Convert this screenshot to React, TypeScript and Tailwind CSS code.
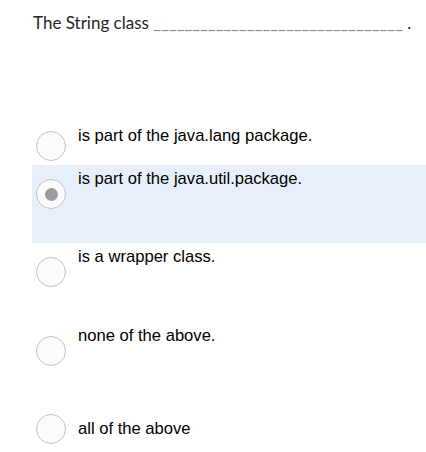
import React from 'react';

interface Choice {
  label: string;
  checked?: boolean;
  row: string;
  radio: string;
  text: string;
}

const choices: Choice[] = [
  { label: 'is part of the java.lang package.', row: 'h-[43px]', radio: 'mt-[9px]', text: 'mt-[3.5px]' },
  { label: 'is part of the java.util.package.', checked: true, row: 'h-[78px] bg-[#e7f0fa]', radio: 'mt-[14px]', text: 'mt-[3.5px]' },
  { label: 'is a wrapper class.', row: 'h-[79px]', radio: 'mt-[14px]', text: 'mt-[3.5px]' },
  { label: 'none of the above.', row: 'h-[78px]', radio: 'mt-[14px]', text: 'mt-[3.5px]' },
  { label: 'all of the above', row: 'h-[52px]', radio: 'mt-[14px]', text: 'mt-[18.5px]' },
];

const Radio: React.FC<{ checked?: boolean; className: string }> = ({ checked, className }) => (
  <span
    className={`flex h-[30px] w-[30px] shrink-0 items-center justify-center rounded-full border border-[#c3c3c3] bg-[#fafbfd] ${className}`}
  >
    {checked && <span className="h-[13px] w-[13px] rounded-full bg-[#9b9ba2]" />}
  </span>
);

export default function App() {
  return (
    <div className="h-[452px] w-[426px] overflow-hidden bg-white">
      <div
        className="pl-[33px] pt-[11px] text-[17px] leading-[24px] text-[#262626]"
        style={{ fontFamily: 'Lato, "Noto Sans", sans-serif' }}
      >
        The String class <span className="text-[#8a8a8a]">________________________________</span> .
      </div>

      <div className="mt-[87px] pl-[32px]" style={{ fontFamily: '"Liberation Sans", Arial, sans-serif' }}>
        {choices.map(c => (
          <div key={c.label} className={`flex items-start pl-[4px] ${c.row}`}>
            <Radio checked={c.checked} className={c.radio} />
            <span className={`ml-[12px] text-[16.6px] leading-[20px] text-black ${c.text}`}>{c.label}</span>
          </div>
        ))}
      </div>
    </div>
  );
}
